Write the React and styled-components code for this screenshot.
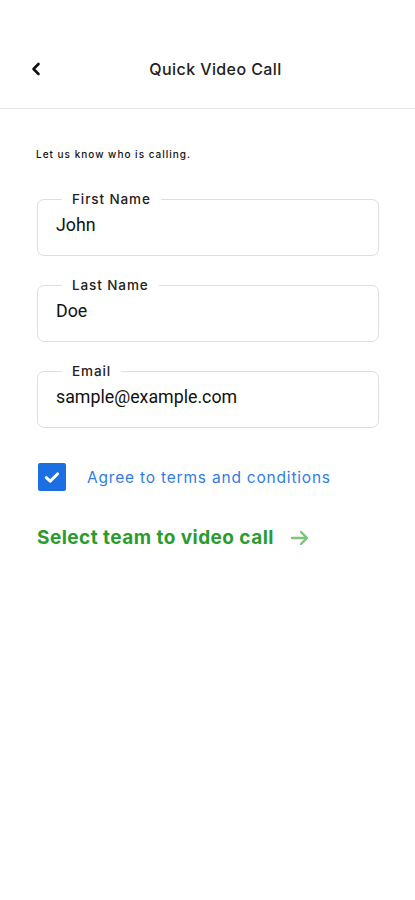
import React from "react";
import styled, { createGlobalStyle } from "styled-components";

const Global = createGlobalStyle`
  html, body { margin: 0; padding: 0; background: #fff; }
  body { font-family: Inter, "Open Sans", sans-serif; color: #111; }
  * { box-sizing: border-box; }
`;

const Page = styled.div`
  width: 415px;
  min-height: 900px;
  background: #fff;
`;

const Header = styled.header`
  height: 109px;
  padding-top: 50px;
  border-bottom: 1.5px solid #e6e6e6;
  display: grid;
  grid-template-columns: 70px 1fr 54px;
  align-items: start;
`;

const BackButton = styled.button`
  border: 0;
  background: none;
  padding: 0;
  margin-left: 28px;
  width: 16px;
  height: 38px;
  display: flex;
  align-items: center;
  justify-content: center;
  cursor: pointer;
`;

const Title = styled.h1`
  margin: 0;
  text-align: center;
  font-size: 16px;
  font-weight: 500;
  letter-spacing: 0.4px;
  line-height: 38px;
  color: #222;
`;

const Content = styled.main`
  padding: 38px 36px 0 37px;
  display: flex;
  flex-direction: column;
`;

const Intro = styled.p`
  margin: 0 0 30px -1px;
  font-size: 10px;
  font-weight: 500;
  line-height: 14px;
  letter-spacing: 1px;
  color: #111;
`;

const Fields = styled.div`
  display: flex;
  flex-direction: column;
  gap: 21px;
`;

const Field = styled.fieldset`
  margin: 0;
  padding: 0 18px 19px;
  border: 1.5px solid #dedede;
  border-radius: 7px;
  min-width: 0;
`;

const Legend = styled.legend`
  margin-left: 6px;
  padding: 0 10px;
  font-size: 13.5px;
  font-weight: 500;
  line-height: 16px;
  letter-spacing: 0.9px;
  color: #222;
`;

const Value = styled.div`
  margin-top: 7px;
  font-family: Roboto, "Liberation Sans", sans-serif;
  font-size: 17.8px;
  line-height: 22px;
  color: #111;
`;

const CheckRow = styled.label`
  margin-top: 35px;
  display: flex;
  align-items: center;
  gap: 21px;
`;

const Box = styled.span`
  width: 28px;
  height: 28px;
  border-radius: 2px;
  background: #1c6fe2;
  display: flex;
  align-items: center;
  justify-content: center;
  margin-left: 1px;
`;

const CheckText = styled.span`
  font-size: 15.5px;
  font-weight: 400;
  letter-spacing: 0.8px;
  color: #2f7de3;
`;

const SelectLink = styled.a`
  margin-top: 35px;
  display: flex;
  align-items: center;
  gap: 16px;
  font-size: 19px;
  font-weight: 700;
  letter-spacing: 0.45px;
  color: #2a9b2f;
  text-decoration: none;
`;

export default function App() {
  return (
    <Page>
      <Global />
      <Header>
        <BackButton aria-label="Back">
          <svg width="12" height="14" viewBox="0 0 12 14">
            <path d="M8.5 2 L3.5 7 L8.5 12" fill="none" stroke="#111" strokeWidth="2.6" strokeLinecap="round" strokeLinejoin="round" />
          </svg>
        </BackButton>
        <Title>Quick Video Call</Title>
        <span />
      </Header>
      <Content>
        <Intro>Let us know who is calling.</Intro>
        <Fields>
          <Field>
            <Legend>First Name</Legend>
            <Value>John</Value>
          </Field>
          <Field>
            <Legend>Last Name</Legend>
            <Value>Doe</Value>
          </Field>
          <Field>
            <Legend>Email</Legend>
            <Value>sample@example.com</Value>
          </Field>
        </Fields>
        <CheckRow>
          <Box>
            <svg width="16" height="13" viewBox="0 0 16 13">
              <path d="M2.3 6.6 L6.2 10.2 L13.7 2.8" fill="none" stroke="#fff" strokeWidth="3" strokeLinecap="round" strokeLinejoin="round" />
            </svg>
          </Box>
          <CheckText>Agree to terms and conditions</CheckText>
        </CheckRow>
        <SelectLink href="#">
          Select team to video call
          <svg width="20" height="16" viewBox="0 0 20 16">
            <path d="M2 8 H17 M11 2 L17 8 L11 14" fill="none" stroke="#7cc47f" strokeWidth="2.4" strokeLinecap="round" strokeLinejoin="round" />
          </svg>
        </SelectLink>
      </Content>
    </Page>
  );
}
